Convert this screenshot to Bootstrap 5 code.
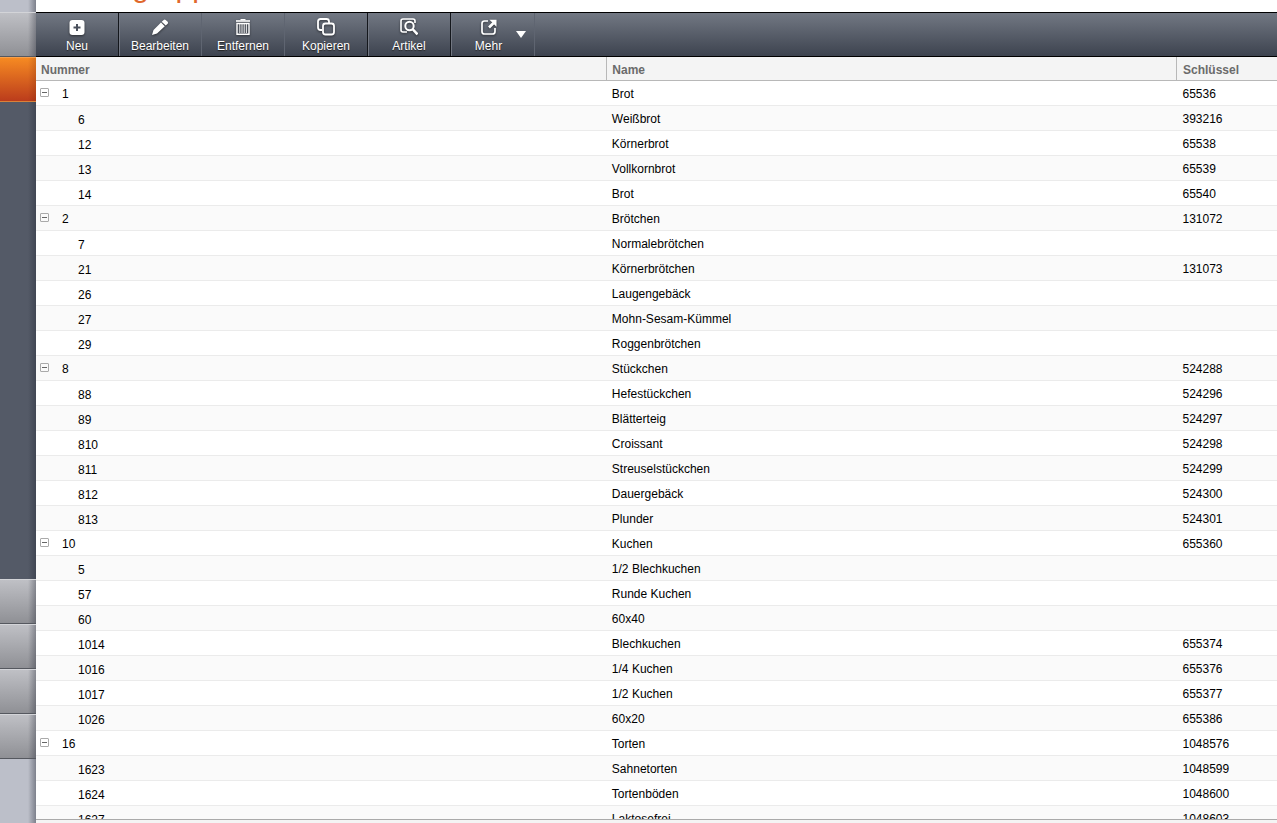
<!DOCTYPE html>
<html lang="de">
<head>
<meta charset="utf-8">
<meta name="viewport" content="width=device-width, initial-scale=1">
<title>Warengruppen</title>
<link href="https://cdn.jsdelivr.net/npm/bootstrap@5.3.0/dist/css/bootstrap.min.css" rel="stylesheet">
<style>
body { font-family: "Liberation Sans", Arial, sans-serif; font-size: 12px; line-height: 16px; color: #000; background: #fff; }
.side { width: 36px; background: linear-gradient(90deg, transparent 28px, rgba(30,34,48,.4)), #bcbfc9; }
.side-top { height: 12px; }
.side-end { height: 64px; }
.side-body { background: linear-gradient(90deg, transparent 28px, rgba(30,34,48,.35)), #545a67; }
.side-btn { height: 45px; width: 36px; border: 0; border-top: 1px solid #d3d4d8; border-bottom: 1px solid #55585f; border-radius: 0; padding: 0;
  background: linear-gradient(90deg, transparent 28px, rgba(30,34,48,.35)), linear-gradient(#bfc0c5, #8f9095); }
.side-btn.current { border-top-color: #f9a04a; border-bottom-color: #d9813a; background: linear-gradient(90deg, transparent 28px, rgba(90,20,0,.2)), linear-gradient(#f68a22, #bb3c1c); }
.title-bar { height: 12px; padding-left: 9px; }
.title-bar h1 { font-size: 30px; line-height: 36px; margin-bottom: 7px; color: #e0682c; }
.tools { height: 45px; border-top: 1px solid #000; border-bottom: 1px solid #000; background: linear-gradient(#727883, #3d434f); }
.tool { width: 83px; border: 0; border-right: 1px solid #5f6571; border-radius: 0; padding: 3px 0 0; color: #fff; background: none; font-size: 12px; line-height: 16px; text-shadow: 0 1px 1px #222; }
.tool.split { border-right-color: #14171c; box-shadow: 1px 0 #727782; }
.tool svg { display: block; margin: 0 auto 2px; filter: drop-shadow(0 1px 1px rgba(0,0,0,.5)); }
.tool:hover { color: #fff; background: rgba(255,255,255,.08); }
.tool.more { padding-right: 8px; width: 84px; }
.tool .arrow { position: absolute; right: 8px; top: 18px; border: 5px solid transparent; border-top: 7px solid #fff; border-bottom: 0; }
.grid-area { min-height: 0; }
.tree { table-layout: fixed; width: 100%; }
.tree thead { border-bottom: 1px solid #b8b8b8; }
.tree th { height: 23px; padding: 3px 5px 0; background: #f4f4f4; color: #6b6b6b; border-left: 1px solid #b8b8b8; }
.tree th:first-child { border-left: 0; }
.tree tbody tr { border-bottom: 1px solid #ebebeb; }
.tree td { height: 25px; padding: 2px 5px 0; white-space: nowrap; }
.tree tbody tr:nth-child(even) { background: #fafafa; }
.tree td:first-child { padding: 4px 4px 0; }
.tree th:last-child, .tree td:last-child { padding-left: 6px; }
.toggle { width: 9px; height: 9px; border: 0; background: none; padding: 0; margin: 0 13px 6px 0; line-height: 0; vertical-align: middle; }
.toggle svg { display: block; }
.child { padding-left: 38px; }
.foot { height: 4px; border-top: 1px solid #aaa; background: #f4f4f4; }
</style>
</head>
<body>
<div class="d-flex vh-100 overflow-hidden">
  <nav class="side d-flex flex-column flex-shrink-0" aria-label="Bereiche">
    <div class="side-top"></div>
    <button class="side-btn" type="button" aria-label="Bereich 1"></button>
    <button class="side-btn current" type="button" aria-label="Bereich 2"></button>
    <div class="side-body flex-grow-1"></div>
    <button class="side-btn" type="button" aria-label="Bereich 3"></button>
    <button class="side-btn" type="button" aria-label="Bereich 4"></button>
    <button class="side-btn" type="button" aria-label="Bereich 5"></button>
    <button class="side-btn" type="button" aria-label="Bereich 6"></button>
    <div class="side-end"></div>
  </nav>
  <main class="d-flex flex-column flex-grow-1 overflow-hidden">
    <header class="title-bar d-flex align-items-end overflow-hidden flex-shrink-0"><h1 class="fw-normal">Warengruppen</h1></header>
    <div class="tools d-flex align-items-stretch flex-shrink-0" role="toolbar" aria-label="Aktionen">
      <button class="tool split" type="button"><svg width="18" height="18" viewBox="0 0 18 18"><rect x="1.500" y="2" width="15" height="15" rx="3" fill="#fff"/><path d="M9 6v7M5.500 9.500h7" stroke="#4a505c" stroke-width="2"/></svg>Neu</button>
      <button class="tool" type="button"><svg width="18" height="18" viewBox="0 0 18 18" fill="#fff"><path d="M1 17l1.500-5L10 4.500l3.800 3.700L6 15.500zM10.700 3.800l2-1.900q1-.8 2 0l2 1.900q.8 1 0 1.900l-2 1.900z"/></svg>Bearbeiten</button>
      <button class="tool" type="button"><svg width="18" height="18" viewBox="0 0 18 18" fill="none" stroke="#fff"><path d="M2 3h14" stroke-width="1.600"/><path d="M6.500 1.700h5" stroke-width="1.400"/><path d="M3 5.500h12v10.700H3z" stroke-width="1.400"/><path d="M5.800 6v9M8 6v9M10.200 6v9M12.400 6v9" stroke-width=".9"/></svg>Entfernen</button>
      <button class="tool split" type="button"><svg width="18" height="18" viewBox="0 0 18 18" fill="none" stroke="#fff" stroke-width="1.800"><path d="M5 12H3.500Q1 12 1 9.500v-6Q1 1 3.500 1h6Q12 1 12 3.500V5"/><rect x="6" y="5.500" width="11" height="11" rx="2.500"/></svg>Kopieren</button>
      <button class="tool split" type="button"><svg width="18" height="18" viewBox="0 0 18 18" fill="none" stroke="#fff" stroke-width="1.600"><path d="M7 14H3Q1 14 1 12V3q0-2 2-2h10q2 0 2 2v2"/><circle cx="9.500" cy="8" r="4.200" stroke-width="2"/><path d="M12.500 11l5 5.500" stroke-width="2.600"/></svg>Artikel</button>
      <button class="tool more position-relative" type="button"><svg width="18" height="18" viewBox="0 0 18 18" fill="none" stroke="#fff" stroke-width="1.700"><path d="M8 3H4.500Q2 3 2 5.500v8Q2 16 4.500 16h8q2.500 0 2.500-2.500V10"/><path d="M9 9.500l4.500-4.500" stroke-width="2.600"/><path d="M9.500 1.800h7v7z" fill="#fff" stroke="none"/></svg>Mehr<span class="arrow"></span></button>
    </div>
    <div class="grid-area flex-grow-1 overflow-hidden">
      <table class="tree">
        <colgroup><col style="width:46%"><col style="width:45.9%"><col></colgroup>
        <thead><tr><th scope="col">Nummer</th><th scope="col">Name</th><th scope="col">Schlüssel</th></tr></thead>
        <tbody id="rows"></tbody>
      </table>
    </div>
    <div class="foot flex-shrink-0"></div>
  </main>
</div>
<script>
const groups = [
  [[1,'Brot',65536],[6,'Weißbrot',393216],[12,'Körnerbrot',65538],[13,'Vollkornbrot',65539],[14,'Brot',65540]],
  [[2,'Brötchen',131072],[7,'Normalebrötchen',''],[21,'Körnerbrötchen',131073],[26,'Laugengebäck',''],[27,'Mohn-Sesam-Kümmel',''],[29,'Roggenbrötchen','']],
  [[8,'Stückchen',524288],[88,'Hefestückchen',524296],[89,'Blätterteig',524297],[810,'Croissant',524298],[811,'Streuselstückchen',524299],[812,'Dauergebäck',524300],[813,'Plunder',524301]],
  [[10,'Kuchen',655360],[5,'1/2 Blechkuchen',''],[57,'Runde Kuchen',''],[60,'60x40',''],[1014,'Blechkuchen',655374],[1016,'1/4 Kuchen',655376],[1017,'1/2 Kuchen',655377],[1026,'60x20',655386]],
  [[16,'Torten',1048576],[1623,'Sahnetorten',1048599],[1624,'Tortenböden',1048600],[1627,'Laktosefrei',1048603]]
];
const toggle = '<button class="toggle" type="button" aria-label="Zuklappen" aria-expanded="true"><svg width="9" height="9" viewBox="0 0 9 9" fill="none"><rect x=".5" y=".5" width="8" height="8" rx=".5" stroke="#aaa"/><path d="M2 4.500h5" stroke="#666"/></svg></button>';
document.getElementById('rows').innerHTML = groups.map(g => g.map(([no, name, key], i) =>
  `<tr><td>${i ? `<span class="child">${no}</span>` : toggle + no}</td><td>${name}</td><td>${key}</td></tr>`).join('')).join('');
</script>
<script src="https://cdn.jsdelivr.net/npm/bootstrap@5.3.0/dist/js/bootstrap.bundle.min.js"></script>
</body>
</html>
